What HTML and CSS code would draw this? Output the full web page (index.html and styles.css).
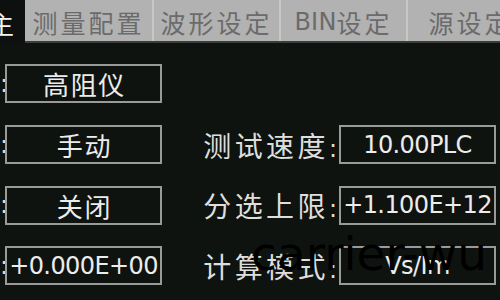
FILE: index.html
```html
<!DOCTYPE html>
<html lang="zh-CN">
<head>
<meta charset="utf-8">
<title>测量配置</title>
<link rel="stylesheet" href="styles.css">
</head>
<body>
<div class="screen">
  <div class="tabs">
    <div class="tab tab-active"><span class="tab-cut">主</span></div>
    <div class="tab">测量配置</div>
    <div class="tab tab-sep">波形设定</div>
    <div class="tab tab-sep"><span class="latin">BIN</span>设定</div>
    <div class="tab tab-sep">源设定</div>
  </div>
  <div class="form">
    <div class="row">
      <div class="label label-left">:</div>
      <div class="field cjk">高阻仪</div>
    </div>
    <div class="row">
      <div class="label label-left">:</div>
      <div class="field cjk">手动</div>
      <div class="label"><span class="cjk">测试速度</span>:</div>
      <div class="field num">10.00PLC</div>
    </div>
    <div class="row">
      <div class="label label-left">:</div>
      <div class="field cjk">关闭</div>
      <div class="label"><span class="cjk">分选上限</span>:</div>
      <div class="field num">+1.100E+12</div>
    </div>
    <div class="row">
      <div class="label label-left">:</div>
      <div class="field num">+0.000E+00</div>
      <div class="label"><span class="cjk">计算模式</span>:</div>
      <div class="field num">Vs/Im</div>
    </div>
  </div>
  <div class="watermark">carrier-wu</div>
</div>
</body>
</html>
```

FILE: styles.css
```css
html, body {
  margin: 0;
  padding: 0;
  background: #0f1310;
}
.screen {
  position: relative;
  width: 500px;
  height: 300px;
  overflow: hidden;
  background: #0f1310;
  font-family: "DejaVu Sans", "Noto Sans CJK SC", sans-serif;
}
.tabs {
  display: flex;
  height: 41px;
  border-bottom: 2px solid #3b3d3b;
  background: #b2b2b2;
}
.tab {
  flex: none;
  width: 127px;
  box-sizing: border-box;
  display: flex;
  align-items: center;
  justify-content: center;
  padding-top: 3px;
  font-size: 25px;
  letter-spacing: 3px;
  color: #6b6b6b;
  white-space: nowrap;
}
.tab-sep {
  border-left: 2px solid #c6cac3;
}
.tab .latin {
  font-size: 24px;
  letter-spacing: 0.2px;
}
.tab-active {
  width: 25px;
  background: #0d100e;
  color: #f2f2f2;
  overflow: hidden;
  justify-content: flex-start;
  margin-bottom: -2px;
}
.tab-cut {
  margin-left: -11px;
}
.form {
  display: flex;
  flex-direction: column;
  gap: 21.5px;
  padding-top: 21px;
}
.row {
  display: grid;
  grid-template-columns: 5px 157px 177px 157px;
  align-items: center;
  height: 39px;
}
.label {
  text-align: right;
  padding-right: 2px;
  font-size: 24px;
  color: #dedede;
  white-space: nowrap;
}
.label-left {
  padding-right: 0;
}
.label .cjk {
  font-size: 28px;
  letter-spacing: 3.4px;
}
.field {
  box-sizing: border-box;
  height: 39px;
  border: 2px solid #9a9a9a;
  display: flex;
  align-items: center;
  justify-content: center;
  color: #ececec;
  white-space: nowrap;
  overflow: hidden;
}
.field.cjk {
  font-size: 26px;
  letter-spacing: 1.7px;
  padding-left: 2px;
}
.field.num {
  font-size: 24px;
  letter-spacing: -0.6px;
}
.watermark {
  position: absolute;
  left: 251px;
  top: 230px;
  font-family: "DejaVu Sans", sans-serif;
  font-size: 47px;
  line-height: 47px;
  color: #000;
  white-space: nowrap;
}
```
